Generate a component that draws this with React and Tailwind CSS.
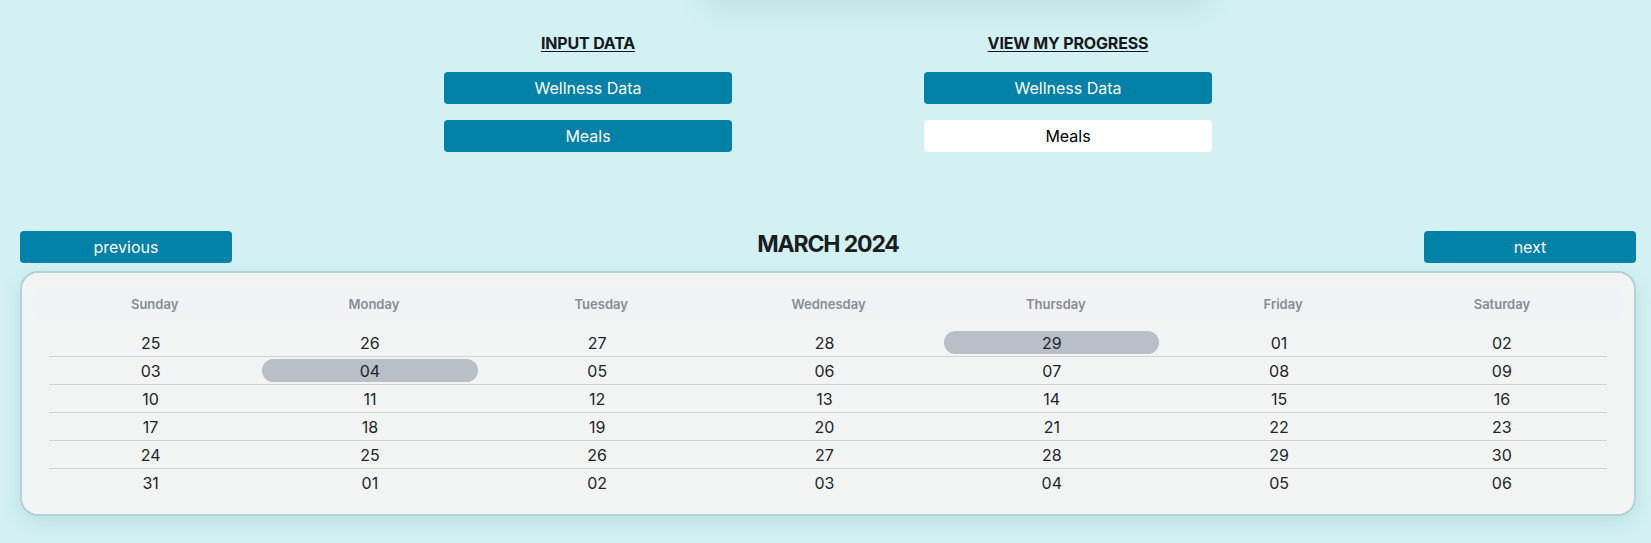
import React from "react";

const days = ["Sunday", "Monday", "Tuesday", "Wednesday", "Thursday", "Friday", "Saturday"];
const weeks = [
  ["25", "26", "27", "28", "29", "01", "02"],
  ["03", "04", "05", "06", "07", "08", "09"],
  ["10", "11", "12", "13", "14", "15", "16"],
  ["17", "18", "19", "20", "21", "22", "23"],
  ["24", "25", "26", "27", "28", "29", "30"],
  ["31", "01", "02", "03", "04", "05", "06"],
];
const highlighted = { "0-4": true, "1-1": true };

const cols = "grid grid-cols-[211fr_227fr_227fr_227fr_227fr_227fr_210fr]";

function NavColumn({ title, light }) {
  return (
    <div className="flex w-[288px] flex-col items-center">
      <h2 className="text-[16px] leading-[24px] font-bold tracking-[-0.01em] text-[#16191c] underline underline-offset-2">
        {title}
      </h2>
      <button className="mt-[17px] h-[32px] w-full rounded-[4px] bg-[#0081a7] text-[16px] text-white">
        Wellness Data
      </button>
      <button
        className={
          light
            ? "mt-4 h-[32px] w-full rounded-[4px] bg-white text-[16px] text-black"
            : "mt-4 h-[32px] w-full rounded-[4px] bg-[#0081a7] text-[16px] text-white"
        }
      >
        Meals
      </button>
    </div>
  );
}

export default function App() {
  return (
    <div className="relative min-h-screen overflow-hidden bg-[#d3f1f3] pl-[20px] pr-[15px] font-['Inter',_'Noto_Sans',_sans-serif]">
      <div className="absolute left-[700px] top-[-34px] h-[50px] w-[515px] rounded-full bg-[rgba(0,90,100,0.07)] blur-[12px]" />

      <div className="relative flex justify-center gap-[192px] pt-[31px]">
        <NavColumn title="INPUT DATA" />
        <NavColumn title="VIEW MY PROGRESS" light />
      </div>

      <div className="mt-[79px] flex items-start justify-between">
        <button className="h-[32px] w-[212px] rounded-[4px] bg-[#0081a7] text-[16px] text-white">
          previous
        </button>
        <h1 className="-mt-[3px] text-[23px] leading-[32px] font-bold tracking-[-0.05em] text-[#1a1d21]">
          MARCH 2024
        </h1>
        <button className="h-[32px] w-[212px] rounded-[4px] bg-[#0081a7] text-[16px] text-white">
          next
        </button>
      </div>

      <div className="mt-2 rounded-[18px] border-2 border-[#b4d3d7] bg-[#f2f4f4] px-[11px] pt-[15px] pb-[18px] shadow-[0_6px_20px_rgba(0,90,100,0.12)]">
        <div className={`${cols} h-[33px] items-center rounded-md bg-[#f0f2f4] px-4`}>
          {days.map((d) => (
            <div key={d} className="text-center text-[13px] font-semibold text-[#878d93]">
              {d}
            </div>
          ))}
        </div>
        <div className="mx-4 mt-2">
          {weeks.map((week, wi) => (
            <div
              key={wi}
              className={
                wi < weeks.length - 1
                  ? `${cols} h-[28px] items-center border-b border-[#cfd4d5]`
                  : `${cols} h-[27px] items-center`
              }
            >
              {week.map((d, di) => (
                <div key={di} className={di < 6 ? "pr-2" : ""}>
                  <div
                    className={
                      highlighted[`${wi}-${di}`]
                        ? "mx-[2px] flex h-[23px] items-center justify-center rounded-full bg-[#b8bfc6] text-[16px] text-[#212529]"
                        : "mx-[2px] flex h-[23px] items-center justify-center text-[16px] text-[#212529]"
                    }
                  >
                    {d}
                  </div>
                </div>
              ))}
            </div>
          ))}
        </div>
      </div>
    </div>
  );
}
